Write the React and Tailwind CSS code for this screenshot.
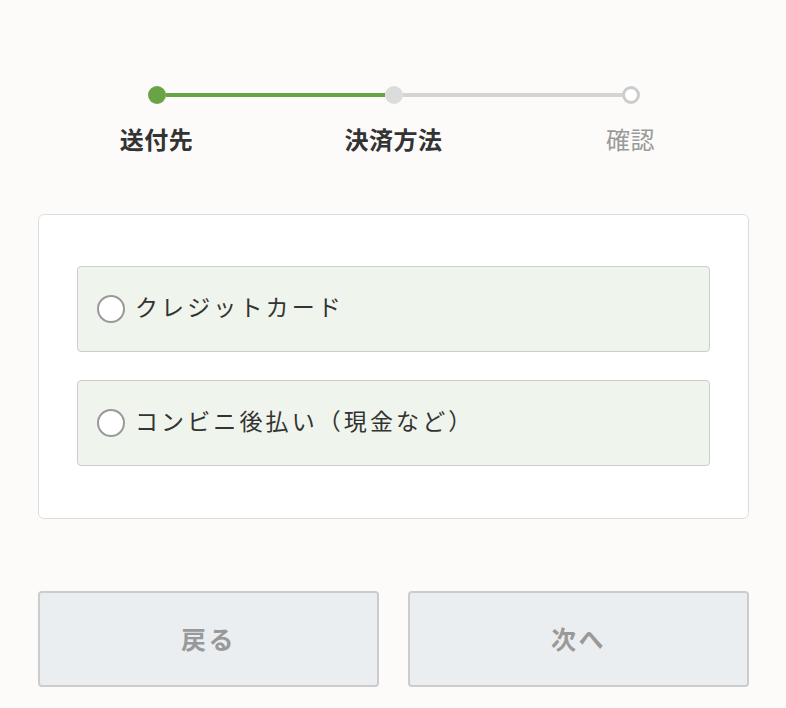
export default function App() {
  const font = { fontFamily: '"Noto Sans CJK JP", "Noto Sans", sans-serif' };
  return (
    <div
      className="min-h-[708px] w-full bg-[#fcfbf9] pl-[38px] pr-[37px] pt-[86px]"
      style={font}
    >
      {/* Stepper */}
      <div className="flex items-center px-[109.5px]">
        <div className="h-[18px] w-[18px] shrink-0 rounded-full bg-[#68a445]" />
        <div className="h-[4px] flex-1 bg-[#68a445]" />
        <div className="h-[18px] w-[18px] shrink-0 rounded-full bg-[#dcdcdc]" />
        <div className="h-[4px] flex-1 bg-[#d4d4d4]" />
        <div className="h-[18px] w-[18px] shrink-0 rounded-full border-[3px] border-[#cccccc] bg-white" />
      </div>
      <div className="mt-[18px] grid grid-cols-3 text-center text-[24px] leading-[33px] tracking-[0.02em]">
        <div className="font-bold text-[#333333]">送付先</div>
        <div className="font-bold text-[#333333]">決済方法</div>
        <div className="text-[#9a9a9a]">確認</div>
      </div>

      {/* Card */}
      <div className="mt-[59px] rounded-[6px] border border-[#dddddd] bg-white px-[38px] pb-[52px] pt-[51px]">
        <div className="flex flex-col gap-[28px]">
          {["クレジットカード", "コンビニ後払い（現金など）"].map((label) => (
            <label
              key={label}
              className="flex h-[86px] items-center rounded-[4px] border border-[#cccccc] bg-[#eff5ec] pl-[19px]"
            >
              <span className="h-[28px] w-[28px] shrink-0 rounded-full border-2 border-[#999999] bg-white" />
              <span className="mb-[5px] ml-[10px] text-[23px] leading-none tracking-[0.135em] text-[#333333]">
                {label}
              </span>
            </label>
          ))}
        </div>
      </div>

      {/* Buttons */}
      <div className="mt-[72px] grid grid-cols-2 gap-[29px]">
        {["戻る", "次へ"].map((t) => (
          <button
            key={t}
            className="flex h-[96px] items-center justify-center rounded-[4px] border-2 border-[#cccccc] bg-[#ebeef0] text-[25px] font-bold tracking-[0.1em] text-[#999999]"
          >
            {t}
          </button>
        ))}
      </div>
    </div>
  );
}
